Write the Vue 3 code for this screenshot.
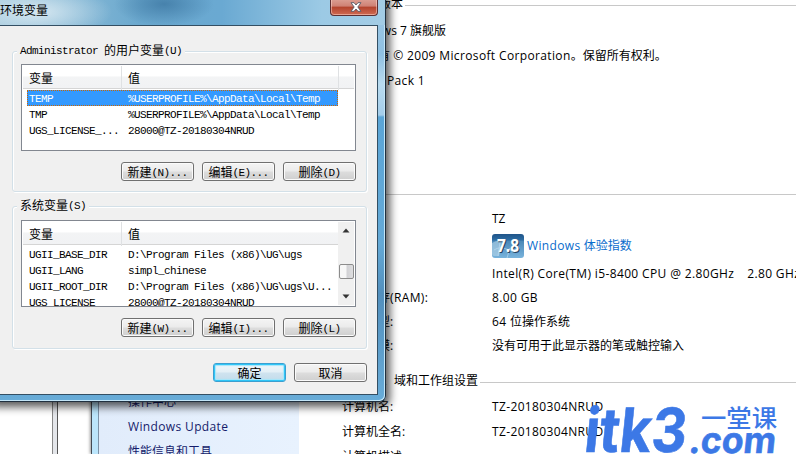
<script setup>
import { ref } from "vue";

const userVars = ref([
  { name: "TEMP", value: "%USERPROFILE%\\AppData\\Local\\Temp" },
  { name: "TMP", value: "%USERPROFILE%\\AppData\\Local\\Temp" },
  { name: "UGS_LICENSE_...", value: "28000@TZ-20180304NRUD" },
]);

const systemVars = ref([
  { name: "UGII_BASE_DIR", value: "D:\\Program Files (x86)\\UG\\ugs" },
  { name: "UGII_LANG", value: "simpl_chinese" },
  { name: "UGII_ROOT_DIR", value: "D:\\Program Files (x86)\\UG\\ugs\\U..." },
  { name: "UGS_LICENSE", value: "28000@TZ-20180304NRUD" },
]);

const selected = ref(0);

const userButtons = [["新建", "(N)..."], ["编辑", "(E)..."], ["删除", "(D)"]];
const systemButtons = [["新建", "(W)..."], ["编辑", "(I)..."], ["删除", "(L)"]];
</script>

<template>
  <div class="desktop">
    <!-- fenêtre du fond à gauche -->
    <div class="back-window"></div>

    <!-- fenêtre Système -->
    <div class="system">
      <div class="frame"></div>
      <aside class="side">
        <a>操作中心</a>
        <a class="latin">Windows Update</a>
        <a>性能信息和工具</a>
      </aside>
      <main class="info">
        <h2 class="edition"><span>Windows 版本</span></h2>
        <p class="win7">Windows 7 旗舰版</p>
        <p class="copy">版权所有 <span class="latin">© 2009 Microsoft Corporation</span>。保留所有权利。</p>
        <p class="pack latin">Service Pack 1</p>
        <h2 class="sys-title"><span>系统</span></h2>
        <dl>
          <dt>型号:</dt>
          <dd>TZ</dd>
        </dl>
        <dl class="rating">
          <dt>分级:</dt>
          <dd>
            <svg class="badge" width="32" height="24" viewBox="0 0 32 24">
              <defs>
                <linearGradient id="badge" x1="0" y1="0" x2="0" y2="1">
                  <stop offset="0" stop-color="#1f5489" />
                  <stop offset=".25" stop-color="#2d6ca2" />
                  <stop offset=".3" stop-color="#4b88b8" />
                  <stop offset="1" stop-color="#78b3dc" />
                </linearGradient>
              </defs>
              <rect width="32" height="24" rx="3" fill="url(#badge)" />
              <path d="M0 9Q7 5 10 8L7 22H2Q0 22 0 20Z" fill="#a9cee5" opacity=".7" />
              <path d="M2 16Q8 12 14 15T28 14M8 8L6 22M18 14L15 24" stroke="#b9d9ee" fill="none" opacity=".7" />
              <text x="6" y="18.5" textLength="22" lengthAdjust="spacingAndGlyphs" fill="#24435f">7.8</text>
              <text x="5" y="17.5" textLength="22" lengthAdjust="spacingAndGlyphs" fill="#fff">7.8</text>
            </svg>
            <a><span class="latin">Windows</span> 体验指数</a>
          </dd>
        </dl>
        <dl class="cpu latin">
          <dt>处理器:</dt>
          <dd><span>Intel(R) Core(TM) i5-8400 CPU @ 2.80GHz</span><span>2.80 GHz</span></dd>
        </dl>
        <dl>
          <dt>安装内存<span class="latin">(RAM):</span></dt>
          <dd class="latin">8.00 GB</dd>
        </dl>
        <dl>
          <dt>系统类型:</dt>
          <dd><span class="latin">64 </span>位操作系统</dd>
        </dl>
        <dl>
          <dt>笔和触摸:</dt>
          <dd>没有可用于此显示器的笔或触控输入</dd>
        </dl>
        <h2 class="domain"><span>计算机名称、域和工作组设置</span></h2>
        <dl class="net">
          <dt>计算机名:</dt>
          <dd class="latin">TZ-20180304NRUD</dd>
        </dl>
        <dl class="net">
          <dt>计算机全名:</dt>
          <dd class="latin">TZ-20180304NRUD</dd>
        </dl>
        <dl class="net">
          <dt>计算机描述:</dt>
          <dd></dd>
        </dl>
      </main>
    </div>

    <!-- boîte de dialogue -->
    <div class="dialog">
      <header class="title">
        <span>环境变量</span>
        <button class="close">
          <svg width="12" height="10" viewBox="0 0 12 10">
            <path d="M1 .7H4L6 3L8 .7H11L7.8 5L11 9.3H8L6 7L4 9.3H1L4.2 5Z" fill="#fff" stroke="#565a68" stroke-width=".9" />
          </svg>
        </button>
      </header>
      <div class="client">
        <fieldset>
          <legend><i class="sim">Administrator </i>的用户变量<i class="sim">(U)</i></legend>
          <div class="list">
            <div class="head">
              <span class="col">变量</span>
              <span class="col val">值</span>
            </div>
            <div class="rows">
              <div
                v-for="(item, i) in userVars"
                :key="item.name"
                class="row"
                :class="{ selected: i === selected }"
                @click="selected = i"
              >
                <span>{{ item.name }}</span><span>{{ item.value }}</span>
              </div>
            </div>
          </div>
          <div class="buttons">
            <button v-for="b in userButtons" :key="b[1]" class="btn">{{ b[0] }}<i class="sim">{{ b[1] }}</i></button>
          </div>
        </fieldset>

        <fieldset class="second">
          <legend>系统变量<i class="sim">(S)</i></legend>
          <div class="list scrolled">
            <div class="content">
              <div class="head">
                <span class="col">变量</span>
                <span class="col val">值</span>
              </div>
              <div class="rows">
                <div v-for="item in systemVars" :key="item.name" class="row">
                  <span>{{ item.name }}</span><span>{{ item.value }}</span>
                </div>
              </div>
            </div>
            <div class="scrollbar">
              <svg width="8" height="5" viewBox="0 0 8 5"><path d="M.5 4.5L4 .5L7.5 4.5Z" fill="#333" /></svg>
              <div class="thumb"></div>
              <svg width="8" height="5" viewBox="0 0 8 5"><path d="M.5 .5H7.5L4 4.5Z" fill="#333" /></svg>
            </div>
          </div>
          <div class="buttons">
            <button v-for="b in systemButtons" :key="b[1]" class="btn">{{ b[0] }}<i class="sim">{{ b[1] }}</i></button>
          </div>
        </fieldset>

        <div class="buttons bottom">
          <button class="btn ok">确定</button>
          <button class="btn">取消</button>
        </div>
      </div>
    </div>

    <svg class="watermark" width="200" height="56" viewBox="0 0 200 56">
      <g fill="#3c78e6">
        <text class="mark" transform="translate(2 52) skewX(-6)" font-size="61" textLength="102" lengthAdjust="spacingAndGlyphs">itk3</text>
        <text class="mark" transform="translate(107 53) skewX(-6)" font-size="36" textLength="87" lengthAdjust="spacingAndGlyphs">.com</text>
        <text class="cn" x="120" y="27" font-size="24" textLength="76" lengthAdjust="spacingAndGlyphs">一堂课</text>
      </g>
    </svg>
  </div>
</template>

<style>
body {
  overflow: hidden;
}
</style>

<style scoped>
.desktop {
  position: relative;
  width: 796px;
  height: 454px;
  overflow: hidden;
  background: #fff;
  font-family: "Open Sans", "Noto Sans CJK SC", sans-serif;
  font-size: 12px;
  line-height: 16px;
  color: #000;
}
* {
  box-sizing: border-box;
}
i {
  font-style: normal;
}
.latin {
  letter-spacing: 0.36px;
}

.back-window {
  position: absolute;
  left: -10px;
  top: 0;
  width: 68px;
  height: 460px;
  background: #fff;
  border-right: 1px solid #555;
  box-shadow: inset -4px 0 #e4e6ea, inset -5px 0 #888;
}

/* Système */
.system {
  position: absolute;
  left: 91px;
  top: 0;
  width: 705px;
  height: 454px;
  display: flex;
  overflow: hidden;
  border-left: 1px solid #444b55;
  background: #fff;
  box-shadow: -1px 0 3px #999;
}
.frame {
  width: 7px;
  flex: none;
  background: #bce6fc;
  border-right: 1px solid #7e93a8;
}
.side {
  width: 200px;
  flex: none;
  padding: 394px 0 0 29px;
  background: linear-gradient(90deg, #e1ecfb, #e8f2fe);
  color: #151c6b;
}
.side a {
  display: block;
  height: 25px;
  white-space: nowrap;
}
.info {
  flex: 1;
  min-width: 0;
  padding-left: 43px;
  white-space: nowrap;
}
h2 {
  display: flex;
  align-items: center;
  height: 16px;
  margin: 0 0 0 -20px;
  font-size: 12px;
  font-weight: 400;
}
h2::after {
  content: "";
  flex: 1;
  height: 1px;
  margin: 3px 0 0 2px;
  background: #c8c8c8;
}
.edition {
  margin-top: -4px;
}
.edition span {
  width: 81px;
  text-align: right;
}
p {
  margin: 0;
  height: 25px;
}
.win7 {
  margin-top: 11px;
  width: 104px;
  display: flex;
  justify-content: flex-end;
}
.pack {
  width: 83px;
  display: flex;
  justify-content: flex-end;
}
.sys-title {
  margin-top: 87px;
  margin-bottom: 11px;
}
dl {
  display: grid;
  grid-template-columns: 150px 1fr;
  height: 24px;
  margin: 0;
}
dd {
  margin: 0;
}
.sys-title + dl {
  margin-top: -1px;
}
.rating {
  height: 31px;
}
.rating dd {
  display: flex;
  gap: 3px;
  line-height: 22px;
}
.badge {
  margin-top: -1px;
}
.rating a {
  color: #0a6ccc;
}
.badge text {
  font: 700 17px "Open Sans", sans-serif;
}
.cpu span + span {
  margin-left: 13px;
}
.domain {
  margin-top: 11px;
}
.domain + .net {
  margin-top: 10px;
}
.net {
  height: 25px;
}

/* Boîte de dialogue */
.dialog {
  position: absolute;
  left: -8px;
  top: -6px;
  width: 394px;
  height: 408px;
  padding: 6px 7px 7px 8px;
  border: solid #20303f;
  border-width: 0 1px 1px 0;
  border-radius: 0 0 6px 0;
  background: linear-gradient(180deg, #a2cbe6 0, #8fc0e2 60px, #b9dbef 90px, #a4cdea 121px, #5ba5d6 123px, #64a9d6 250px, #528fbd 300px, #68acd8 100%);
  box-shadow: inset -1px -1px #c3e5f7, 2px 3px 9px 2px rgba(0, 0, 0, 0.65);
  font-family: "Noto Sans CJK SC", sans-serif;
}
.title {
  display: flex;
  justify-content: space-between;
  height: 25px;
  margin: 0 -7px 0 -8px;
  padding: 2px 7px 0 8px;
  background:
    radial-gradient(75px 26px at 45px 12px, rgba(225, 238, 245, 0.85), rgba(200, 224, 236, 0)),
    radial-gradient(50px 22px at 172px 4px, rgba(42, 98, 143, 0.55), rgba(42, 98, 143, 0)),
    linear-gradient(90deg, #a5cadd, #6aa8ce 150px, #6aa9d2 230px, #9ccae5 330px, #a3cce5);
}
.close {
  display: flex;
  align-items: center;
  justify-content: center;
  width: 48px;
  height: 17px;
  margin-top: -3px;
  padding: 0 0 0 3px;
  border: 1px solid #5d2f32;
  border-top: 0;
  border-radius: 0 0 4px 4px;
  background: linear-gradient(#dca094, #cf8174 45%, #b3432d 50%, #cf6a52);
  box-shadow: inset 0 0 0 1px rgba(255, 220, 210, 0.5);
}
.client {
  height: 370px;
  padding: 25px 10px 0 12px;
  background: #f0f0f0;
  border: solid #344f63;
  border-width: 1px 1px 1px 0;
}
fieldset {
  height: 141px;
  min-width: 0;
  margin: 0;
  padding: 12px 10px 0 8px;
  border: 1px solid #d3e0e8;
  border-radius: 3px;
  box-shadow: inset 1px 1px #fff, 1px 1px #fff;
}
legend {
  float: left;
  height: 16px;
  margin: -22px 0 0 -4px;
  padding: 0 3px;
  background: #f0f0f0;
  white-space: nowrap;
}
.second {
  height: 143px;
  margin-top: 14px;
  padding-top: 13px;
}
.second legend {
  margin-top: -23px;
}
.sim,
.row {
  font-family: "Liberation Mono", monospace;
  font-size: 11px;
  letter-spacing: -0.6px;
  white-space: pre;
}
.sim {
  line-height: 1;
  vertical-align: 1px;
}
.list {
  clear: both;
  height: 87px;
  padding: 1px;
  overflow: hidden;
  border: 1px solid #828790;
  background: #fff;
}
.scrolled {
  display: flex;
}
.content {
  flex: 1;
  min-width: 0;
}
.head {
  display: grid;
  grid-template-columns: 99px 217px 1fr;
  height: 23px;
  line-height: 24px;
  background: linear-gradient(#fff 45%, #f3f4f5 50%, #f1f2f4);
  border-bottom: 1px solid #d5d5d5;
}
.col {
  padding-left: 6px;
  border-right: 1px solid #dfe1e3;
}
.rows {
  padding: 1px 0 0 4px;
}
.row {
  display: grid;
  grid-template-columns: 99px 1fr;
  width: 311px;
  height: 16px;
  padding-left: 1px;
  border: 1px solid transparent;
  line-height: 16px;
}
.row.selected {
  color: #fff;
  background: #3399ff;
  border: 1px dotted #cc6600;
}
.scrollbar {
  display: flex;
  flex: none;
  flex-direction: column;
  align-items: center;
  width: 16px;
  padding-top: 6px;
  background: #f0f0f0;
}
.scrollbar svg {
  flex: none;
}
.thumb {
  flex: none;
  width: 15px;
  height: 15px;
  margin: 31px 0 15px;
  border: 1px solid #8c8c8c;
  border-radius: 2px;
  background: linear-gradient(90deg, #f7f7f7 45%, #d2d2d5 55%, #dedee0);
}
.buttons {
  display: flex;
  justify-content: flex-end;
  gap: 8px;
  margin-top: 11px;
}
.btn {
  width: 73px;
  height: 19px;
  padding: 0;
  border: 1px solid #707070;
  border-radius: 3px;
  background: linear-gradient(#f4f4f4, #ebebeb 48%, #dddddd 52%, #cfcfcf);
  box-shadow: inset 0 0 0 1px #fbfbfb;
  font: 12px/15px "Noto Sans CJK SC", sans-serif;
  color: #000;
  white-space: nowrap;
}
.bottom {
  margin-top: 14px;
}
.ok {
  border-color: #3c9fd0;
  background: linear-gradient(#f0f6fa, #e3eff6 48%, #cfe3ef 52%, #c3dceb);
  box-shadow: inset 0 0 0 1px #2fc6f7, inset 0 0 1px 2px #a5e6fb;
}

.watermark {
  position: absolute;
  left: 581px;
  top: 400px;
}
.mark {
  font-family: Inter, sans-serif;
  font-weight: 700;
  stroke: #3c78e6;
  stroke-width: 0.6px;
}
.cn {
  font-family: "Noto Sans CJK SC", sans-serif;
  font-weight: 500;
}
</style>
